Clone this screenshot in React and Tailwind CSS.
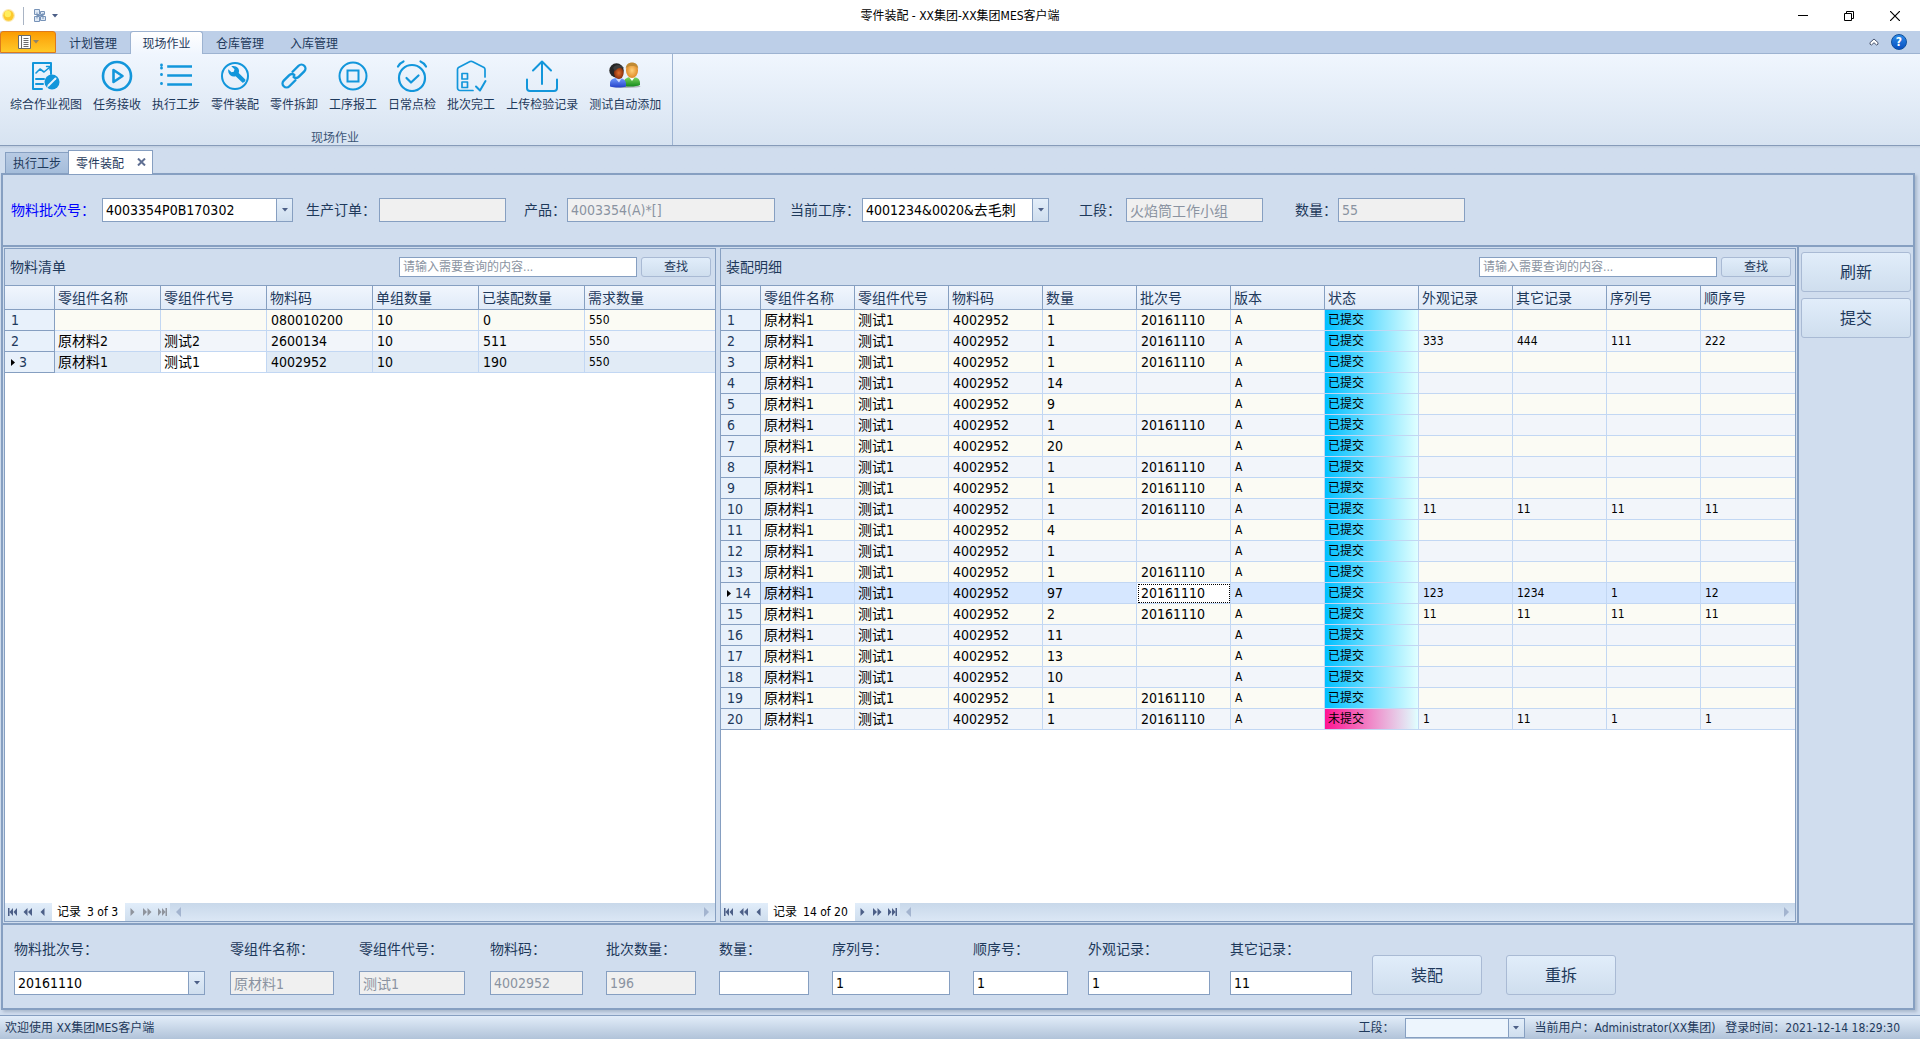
import React, { useState } from 'react';

const ribbonTabs = ['计划管理', '现场作业', '仓库管理', '入库管理'];

const materialRows = [
    ['', '', '080010200', '10', '0', '550'],
    ['原材料2', '测试2', '2600134', '10', '511', '550'],
    ['原材料1', '测试1', '4002952', '10', '190', '550'],
];

// qty, batch, submitted, appearance, other, serial, sequence
const detailRows = [
    ['1', '20161110', true],
    ['1', '20161110', true, '333', '444', '111', '222'],
    ['1', '20161110', true],
    ['14', '', true],
    ['9', '', true],
    ['1', '20161110', true],
    ['20', '', true],
    ['1', '20161110', true],
    ['1', '20161110', true],
    ['1', '20161110', true, '11', '11', '11', '11'],
    ['4', '', true],
    ['1', '', true],
    ['1', '20161110', true],
    ['97', '20161110', true, '123', '1234', '1', '12'],
    ['2', '20161110', true, '11', '11', '11', '11'],
    ['11', '', true],
    ['13', '', true],
    ['10', '', true],
    ['1', '20161110', true],
    ['1', '20161110', false, '1', '11', '1', '1'],
];

const materialHeads = ['零组件名称', '零组件代号', '物料码', '单组数量', '已装配数量', '需求数量'];
const detailHeads = ['零组件名称', '零组件代号', '物料码', '数量', '批次号', '版本', '状态', '外观记录', '其它记录', '序列号', '顺序号'];

function LineIcon({ children, width = 2 }) {
    return (
        <svg width="32" height="32" viewBox="0 0 32 32" fill="none" stroke="#1296db" strokeWidth={width} strokeLinecap="round" strokeLinejoin="round">
            {children}
        </svg>
    );
}

const ReportIcon = () => (
    <LineIcon>
        <path d="M12 29H3V3h18v11" />
        <path d="M6 13l4-4 4 3 6-5" strokeWidth="1.6" />
        <path d="M16.5 6.5H20V10" strokeWidth="1.4" />
        <path d="M6 19h8M6 24h7" />
        <circle cx="22" cy="22" r="7.5" fill="#1296db" stroke="none" />
        <path d="M18.5 25.5l7-7" stroke="#eaf3fc" strokeWidth="2" />
        <path d="M18 26.2l-.6 1.2" stroke="#eaf3fc" strokeWidth="1" />
    </LineIcon>
);

const PlayIcon = () => (
    <LineIcon width={2.6}>
        <circle cx="16" cy="16" r="14" />
        <path d="M12.5 10v12l9-6z" />
    </LineIcon>
);

const ListIcon = () => (
    <LineIcon width={2.6}>
        <path d="M8.5 6.5H31M8.5 15.5H31M8.5 24.5H31" strokeLinecap="square" />
        <path d="M1.5 5v.2M1.5 8v.2M1.5 14.5v.2M1.5 23.5v.2" strokeWidth="2.8" />
    </LineIcon>
);

const WrenchIcon = () => (
    <LineIcon>
        <circle cx="16" cy="16" r="13" />
        <path
            d="M9.3 9.2l3.2 3.1 2.3-.6.7-2.4-3.2-3.1c2.7-.6 5.3 0 6.7 1.9 1.2 1.6 1.3 3.3.7 5l6.6 6.4c1 1-1.9 4-3 3l-6.6-6.3c-2 .7-3.9.3-5.4-1-1.7-1.6-2.5-3.900-2-6z"
            fill="#1296db"
            stroke="none"
        />
    </LineIcon>
);

const ChainIcon = () => (
    <LineIcon width={2.4}>
        <g transform="rotate(-45 16 16)">
            <path d="M14 20H5.5a4 4 0 0 1 0-8H13a4 4 0 0 1 4 3.5" />
            <path d="M18 12h8.5a4 4 0 0 1 0 8H19a4 4 0 0 1-4-3.5" />
        </g>
    </LineIcon>
);

const StopIcon = () => (
    <LineIcon>
        <circle cx="16" cy="16" r="13.5" />
        <path d="M10.5 10.5h11v11h-11z" strokeLinejoin="miter" />
    </LineIcon>
);

const AlarmIcon = () => (
    <LineIcon width={2.2}>
        <circle cx="16" cy="18" r="13" />
        <path d="M10.5 18l4.5 4.5 7.5-7M2 6.5C3.5 4 5 2.5 7.5 1.5M30 6.5C28.5 4 27 2.5 24.5 1.5" />
    </LineIcon>
);

const BatchIcon = () => (
    <LineIcon width={1.7}>
        <path d="M18 30.500H5a2.500 2.500 0 0 1-2.500-2.500V9.500c0-1 .3-1.500 1-2L15 1.600c.8-.4 1.500-.4 2.200 0L29 7.500c.7.500 1 1 1 2V17" />
        <path d="M7 13.500h5.500V19H7zM7 22h5.500v5.500H7z" />
        <path d="M21 26.500l4 4L30.500 21" strokeWidth="2" />
    </LineIcon>
);

const UploadIcon = () => (
    <LineIcon>
        <path d="M1 19.500V28a3 3 0 0 0 3 3h24a3 3 0 0 0 3-3v-8.500M16 24V1.500M7 10.500l9-9 9 9" />
    </LineIcon>
);

const PeopleIcon = () => (
    <svg width="32" height="32" viewBox="0 0 32 32">
        <defs>
            <linearGradient id="shirtBlue" x1="0" y1="0" x2="0" y2="1">
                <stop offset="0" stopColor="#6f9bff" />
                <stop offset="1" stopColor="#2541c8" />
            </linearGradient>
            <linearGradient id="shirtGreen" x1="0" y1="0" x2="0" y2="1">
                <stop offset="0" stopColor="#7fd860" />
                <stop offset="1" stopColor="#148a1c" />
            </linearGradient>
            <radialGradient id="faceDark">
                <stop offset="0" stopColor="#e0702e" />
                <stop offset="1" stopColor="#8a2f0c" />
            </radialGradient>
            <radialGradient id="faceLight">
                <stop offset="0" stopColor="#ffd07a" />
                <stop offset="1" stopColor="#e08b28" />
            </radialGradient>
        </defs>
        <ellipse cx="17" cy="26.500" rx="14.500" ry="1.500" fill="#000" opacity=".25" />
        <path d="M15 26v-4c0-3 3-5 8-5s8 2 8 6v2c-3 1.500-10 2-16 1z" fill="url(#shirtGreen)" />
        <path d="M20 17l3 4 3-4z" fill="#fff" />
        <ellipse cx="23" cy="10.500" rx="6" ry="7.500" fill="url(#faceLight)" />
        <path d="M16.800 8.500c0-4 3-6 6.200-6s6.200 2 6.200 6c-1.500-2-3.500-2.500-6.200-2.500s-4.700.5-6.200 2.500z" fill="#c08a34" />
        <path d="M1 26.500v-3c0-4 3-5.500 8-5.500s8 2 8 6v2.500c-3 1.200-11 1.500-16 0z" fill="url(#shirtBlue)" />
        <path d="M6.500 18.500l3.500 4 2.500-4z" fill="#cfdcff" />
        <circle cx="7.500" cy="10.500" r="7.200" fill="#262626" />
        <ellipse cx="9.800" cy="13" rx="4.800" ry="6" fill="url(#faceDark)" />
        <path d="M4 8c2-4 8-4 11 0-4-1-7 0-9 3z" fill="#3d3d3d" />
    </svg>
);

const tools = [
    { label: '综合作业视图', Icon: ReportIcon },
    { label: '任务接收', Icon: PlayIcon },
    { label: '执行工步', Icon: ListIcon },
    { label: '零件装配', Icon: WrenchIcon },
    { label: '零件拆卸', Icon: ChainIcon },
    { label: '工序报工', Icon: StopIcon },
    { label: '日常点检', Icon: AlarmIcon },
    { label: '批次完工', Icon: BatchIcon },
    { label: '上传检验记录', Icon: UploadIcon },
    { label: '测试自动添加', Icon: PeopleIcon },
];

function Caret({ className = '' }) {
    return (
        <svg className={className} width="6" height="4" viewBox="0 0 6 4">
            <path d="M0 0h6L3 3.5z" fill="#4c5f87" />
        </svg>
    );
}

function Combo({ id, value, className, height = 'h-6', text = 'text-[14px]', bg = 'bg-white' }) {
    return (
        <div className={`relative shrink-0 ${height} ${className}`}>
            <select id={id} className={`h-full w-full appearance-none border border-[#869fc1] pl-[3px] pr-5 text-black outline-none ${bg} ${text}`}>
                <option>{value}</option>
            </select>
            <span className="pointer-events-none absolute inset-y-px right-px flex w-4 items-center justify-center border-l border-[#869fc1] bg-linear-to-b from-[#e3eefa] to-[#cfdeee]">
                <Caret />
            </span>
        </div>
    );
}

function TextBox({ id, value, disabled, className = '' }) {
    return (
        <input
            id={id}
            type="text"
            defaultValue={value}
            disabled={disabled}
            className={`h-6 shrink-0 border border-[#869fc1] bg-white px-[3px] text-[14px] text-black outline-none disabled:bg-[#f0f0f0] disabled:text-[#8a93a1] ${className}`}
        />
    );
}

function PushButton({ children, className }) {
    return (
        <button type="button" className={`shrink-0 rounded-[3px] border border-[#a9bad4] bg-linear-to-b from-[#e1edfa] to-[#cfdeee] text-[#1e395b] ${className}`}>
            {children}
        </button>
    );
}

function NavIcon({ name, disabled }) {
    const shapes = {
        first: 'M0 0h1.5v8H0zM5 0v8L1.5 4zM9 0v8L5.5 4z',
        fastPrev: 'M4.5 0v8L.5 4zM9 0v8L5 4z',
        prev: 'M6.5 0v8L2.5 4z',
        next: 'M2.5 0v8l4-4z',
        fastNext: 'M0 0v8l4-4zM4.5 0v8l4-4z',
        last: 'M0 0v8l3.5-4zM4 0v8l3.5-4zM7.5 0H9v8H7.5z',
    };
    return (
        <svg width="9" height="8" viewBox="0 0 9 8">
            <path d={shapes[name]} fill={disabled ? '#8f949d' : '#4c5f87'} />
        </svg>
    );
}

function NavButton({ name, label, disabled }) {
    return (
        <button type="button" aria-label={label} disabled={disabled} className="flex h-full w-[15px] items-center justify-center">
            <NavIcon name={name} disabled={disabled} />
        </button>
    );
}

function RecordNavigator({ current, total }) {
    const atEnd = current === total;
    return (
        <div className="flex h-[18px] shrink-0 items-stretch bg-linear-to-b from-[#c8d8ea] to-[#dbe7f5] text-[12px]">
            <div className="flex items-center bg-linear-to-b from-[#e1edfa] to-[#cfdeee] pr-0.5">
                <NavButton name="first" label="首条" />
                <NavButton name="fastPrev" label="上一页" />
                <NavButton name="prev" label="上一条" />
            </div>
            <span className="flex items-center gap-1.5 bg-white pr-[7px] pl-[5px] leading-[18px] text-black">
                <span>记录</span>
                <span>{current} of {total}</span>
            </span>
            <div className="flex items-center bg-linear-to-b from-[#e1edfa] to-[#cfdeee]">
                <NavButton name="next" label="下一条" disabled={atEnd} />
                <NavButton name="fastNext" label="下一页" disabled={atEnd} />
                <NavButton name="last" label="末条" disabled={atEnd} />
            </div>
            <div className="flex flex-1 items-center justify-between px-1.5">
                <svg width="5" height="10" viewBox="0 0 5 10">
                    <path d="M5 0v10L0 5z" fill="#a3b4cf" />
                </svg>
                <svg width="5" height="10" viewBox="0 0 5 10">
                    <path d="M0 0v10l5-5z" fill="#a3b4cf" />
                </svg>
            </div>
        </div>
    );
}

function HeadRow({ heads }) {
    return (
        <thead>
            <tr className="h-6 bg-linear-to-b from-[#f1f6fd] to-[#dfeaf8] text-left text-[14px] text-[#1e395b]">
                <th className="border-r border-b border-[#869fc1]" aria-label="行号"></th>
                {heads.map((head) => (
                    <th key={head} className="border-r border-b border-[#869fc1] pl-[3px] font-normal leading-5 last:border-r-0">
                        {head}
                    </th>
                ))}
            </tr>
        </thead>
    );
}

function RowNumber({ n, focused }) {
    return (
        <td className="border-r border-b border-[#869fc1] bg-[#e8f1fb] pl-1.5 text-[14px] leading-5 text-[#1e395b]">
            <span className="flex items-center gap-1">
                {focused && (
                    <svg width="4" height="7" viewBox="0 0 4 7">
                        <path d="M0 0v7l4-3.5z" fill="#000" />
                    </svg>
                )}
                {n}
            </span>
        </td>
    );
}

function Cell({ children, small, className = 'pl-1' }) {
    return (
        <td className={`border-r border-b border-[#c2d7f3] leading-5 text-black last:border-r-0 ${small ? 'text-[12px]' : 'text-[14px]'} ${className}`}>
            {children}
        </td>
    );
}

function stripe(i) {
    return i % 2 === 0 ? 'bg-[#fbfbf4]' : 'bg-[#f2f5fa]';
}

function MaterialTable() {
    const focusedRow = 2;
    return (
        <table className="w-full table-fixed border-separate border-spacing-0">
            <colgroup>
                <col className="w-[50px]" />
                <col className="w-[106px]" />
                <col className="w-[106px]" />
                <col className="w-[106px]" />
                <col className="w-[106px]" />
                <col className="w-[106px]" />
                <col />
            </colgroup>
            <HeadRow heads={materialHeads} />
            <tbody>
                {materialRows.map((row, i) => (
                    <tr key={i} className={`h-[21px] ${i === focusedRow ? 'bg-[#e1ebf6]' : stripe(i)}`}>
                        <RowNumber n={i + 1} focused={i === focusedRow} />
                        {row.map((text, c) => (
                            <Cell key={c} small={c === 5} className={`${c < 2 ? 'pl-[3px]' : 'pl-1'} ${i === focusedRow && c === 1 ? 'bg-white' : ''}`}>
                                {text}
                            </Cell>
                        ))}
                    </tr>
                ))}
            </tbody>
        </table>
    );
}

function DetailTable() {
    const focusedRow = 13;
    return (
        <table className="w-full table-fixed border-separate border-spacing-0">
            <colgroup>
                <col className="w-10" />
                {detailHeads.slice(0, -1).map((head) => (
                    <col key={head} className="w-[94px]" />
                ))}
                <col />
            </colgroup>
            <HeadRow heads={detailHeads} />
            <tbody>
                {detailRows.map(([qty, batch, submitted, ...records], i) => (
                    <tr key={i} className={`h-[21px] ${i === focusedRow ? 'bg-[#d6e7ff]' : stripe(i)}`}>
                        <RowNumber n={i + 1} focused={i === focusedRow} />
                        <Cell className="pl-[3px]">原材料1</Cell>
                        <Cell className="pl-[3px]">测试1</Cell>
                        <Cell>4002952</Cell>
                        <Cell>{qty}</Cell>
                        <Cell className={i === focusedRow ? 'bg-white pl-1 outline-1 -outline-offset-2 outline-dotted outline-black' : 'pl-1'}>{batch}</Cell>
                        <Cell small>A</Cell>
                        <Cell small className={submitted ? 'bg-linear-to-r/srgb from-[#00bfff] to-[#e0ffff] pl-[3px]' : 'bg-linear-to-r/srgb from-[#ff1493] to-[#e0ffff] pl-[3px]'}>
                            {submitted ? '已提交' : '未提交'}
                        </Cell>
                        {[0, 1, 2, 3].map((c) => (
                            <Cell key={c} small>{records[c]}</Cell>
                        ))}
                    </tr>
                ))}
            </tbody>
        </table>
    );
}

function GridPanel({ title, className, children, current, total }) {
    return (
        <section className={`flex flex-col border border-[#869fc1] bg-white ${className}`}>
            <div className="flex h-9 shrink-0 items-center bg-[#d0ddee] pr-1 pl-[5px]">
                <h2 className="flex-1 text-[14px] text-[#1e395b]">{title}</h2>
                <input
                    type="search"
                    aria-label={`${title}查询`}
                    placeholder="请输入需要查询的内容..."
                    className="mr-1 h-5 w-[238px] border border-[#869fc1] bg-white px-[3px] text-[12px] outline-none placeholder:text-[#8a93a1]"
                />
                <PushButton className="h-5 w-[70px] text-[12px] leading-4">查找</PushButton>
            </div>
            <div className="flex-1 border-t border-[#869fc1]">{children}</div>
            <RecordNavigator current={current} total={total} />
        </section>
    );
}

function TopField({ id, label, children, className = '' }) {
    return (
        <div className={`flex shrink-0 items-center ${className}`}>
            <label htmlFor={id} className="flex-1 whitespace-nowrap">{label}：</label>
            {children}
        </div>
    );
}

function BottomField({ id, label, children }) {
    return (
        <div className="flex shrink-0 flex-col">
            <label htmlFor={id} className="mb-3 leading-5">{label}：</label>
            {children}
        </div>
    );
}

export default function App() {
    const [activeTab, setActiveTab] = useState('现场作业');

    return (
        <div className="flex min-h-screen flex-col bg-[#d0ddee] font-['DejaVu_Sans_Condensed','Noto_Sans_CJK_SC',sans-serif] text-[12px] text-[#1e395b]">
            {/* Title bar */}
            <header className="grid h-[31px] shrink-0 grid-cols-[1fr_auto_1fr] items-center bg-white text-black">
                <div className="flex items-center pl-0.5">
                    <svg width="13" height="13" viewBox="0 0 13 13">
                        <circle cx="6.5" cy="6.5" r="6.5" fill="#fbe9b0" />
                        <circle cx="6.5" cy="6.5" r="5.2" fill="#fdc92c" />
                        <circle cx="5.8" cy="5" r="3.2" fill="#ffee5e" />
                    </svg>
                    <span className="mr-[10px] ml-2 h-[18px] w-px bg-[#a9b4c4]"></span>
                    <svg width="12" height="13" viewBox="0 0 12 13" fill="#dfe9f5" stroke="#7793b8">
                        <path d="M.5.5h5v5h-5zM.5 7.5h5v5h-5zM6.5 2.500h4v3h-4zM6.5 7.500h5v4h-5z" />
                        <path d="M3 3.500v6M3 6.500h6M9 4v6" />
                    </svg>
                    <Caret className="ml-1.5" />
                </div>
                <h1 className="text-[12px]">零件装配 - XX集团-XX集团MES客户端</h1>
                <div className="flex h-full items-stretch justify-end pr-0.5">
                    <button type="button" aria-label="最小化" className="flex w-[46px] items-center justify-center">
                        <svg width="10" height="10" viewBox="0 0 10 10"><path d="M0 4.5h10" stroke="#000" /></svg>
                    </button>
                    <button type="button" aria-label="还原" className="flex w-[46px] items-center justify-center">
                        <svg width="10" height="10" viewBox="0 0 10 10" fill="none" stroke="#000"><path d="M.5 2.5h7v7h-7zM2.5 2.5v-2h7v7h-2" /></svg>
                    </button>
                    <button type="button" aria-label="关闭" className="flex w-[46px] items-center justify-center">
                        <svg width="10" height="10" viewBox="0 0 10 10"><path d="M0 0l10 10M10 0L0 10" stroke="#000" strokeWidth="1.2" /></svg>
                    </button>
                </div>
            </header>

            {/* Ribbon tabs */}
            <nav className="flex h-[22px] shrink-0 items-stretch bg-[#bdcfe8]">
                <button type="button" aria-label="菜单" className="flex w-14 items-center justify-center gap-0.5 rounded-t-[3px] border border-[#dd7a1c] bg-linear-to-b from-[#fb9c00] to-[#ffc926]">
                    <svg width="13" height="14" viewBox="0 0 13 14">
                        <path d="M.5.5h12v13H.5z" fill="#fff" stroke="#6b6b6b" />
                        <path d="M3.5 1v12M5.5 3.500h5M5.500 5.500h5M5.500 7.500h5M5.500 9.500h5M5.500 11.500h5" stroke="#6b6b6b" fill="none" />
                    </svg>
                    <svg width="6" height="4" viewBox="0 0 6 4"><path d="M0 0h6L3 3.5z" fill="#8f8468" /></svg>
                </button>
                <div className="flex">
                    {ribbonTabs.map((tab) => (
                        <button
                            key={tab}
                            type="button"
                            onClick={() => setActiveTab(tab)}
                            className={
                                tab === activeTab
                                    ? 'relative -mb-px w-[73px] rounded-t-[3px] border border-b-0 border-[#9db3d1] bg-linear-to-b from-white to-[#f0f6fe] pt-0.5'
                                    : 'w-[74px] pt-[3px]'
                            }
                        >
                            {tab}
                        </button>
                    ))}
                </div>
                <div className="ml-auto flex items-center gap-3 pr-[13px]">
                    <button type="button" aria-label="折叠功能区">
                        <svg width="10" height="8" viewBox="0 0 10 8"><path d="M1 6.200V4.600L5 1l4 3.600v1.600L7.500 7 5 4.700 2.500 7z" fill="#fff" stroke="#4a5670" /></svg>
                    </button>
                    <button type="button" aria-label="帮助" className="flex size-4 items-center justify-center rounded-full border border-[#0d4f9e] bg-linear-to-b from-[#2e8be8] to-[#0a4fc0] text-[12px] leading-none font-bold text-white">
                        ?
                    </button>
                </div>
            </nav>

            {/* Ribbon */}
            <div className="flex h-[93px] shrink-0 border-y border-t-[#9db3d1] border-b-[#869bb9] bg-linear-to-b from-[#f0f6fe] to-[#d7e3f1]">
                <div className="flex flex-col border-r border-[#9db3d1] pr-[6px]">
                    <div className="flex gap-px pt-1.5 pl-[5px]">
                        {tools.map(({ label, Icon }) => (
                            <button key={label} type="button" className="flex flex-col items-center px-[5px]">
                                <Icon />
                                <span className="mt-1 leading-[18px] whitespace-nowrap">{label}</span>
                            </button>
                        ))}
                    </div>
                    <div className="mt-auto pl-1 text-center leading-[14px] text-[#3b5576]">现场作业</div>
                </div>
            </div>

            {/* Document tabs */}
            <div className="flex h-[27px] shrink-0 items-end bg-linear-to-b from-[#bfcddf] to-[#d0ddee] to-10% pl-[5px]">
                <button type="button" className="h-[21px] w-16 border border-b-0 border-[#869fc1] bg-linear-to-b from-[#b7cae3] to-[#a5bddb] pt-0.5 leading-[18px]">
                    执行工步
                </button>
                <div className="relative -mb-px -ml-px flex h-6 w-[85px] items-center justify-between border border-b-0 border-[#869fc1] bg-white pr-1.5 pl-[7px]">
                    <button type="button" className="pt-0.5">零件装配</button>
                    <button type="button" aria-label="关闭选项卡" className="self-start pt-[7px]">
                        <svg width="9" height="8" viewBox="0 0 9 8"><path d="M1 .5l7 7M8 .5l-7 7" stroke="#5f6f92" strokeWidth="2" /></svg>
                    </button>
                </div>
            </div>

            <main className="mr-[5px] ml-px flex flex-1 flex-col border-2 border-[#869fc1] shadow-[2px_2px_3px_#a9b8cc]">
                {/* Batch filters */}
                <form className="flex h-[72px] shrink-0 items-center border-b-2 border-[#869fc1] pl-2 text-[14px]">
                    <TopField id="lot" label="物料批次号" className="mr-[13px] w-[282px] text-[#0000ff]">
                        <Combo id="lot" value="4003354P0B170302" className="w-[191px]" />
                    </TopField>
                    <TopField id="order" label="生产订单" className="mr-[18px] w-[200px]">
                        <TextBox id="order" value="" disabled className="w-[127px]" />
                    </TopField>
                    <TopField id="product" label="产品" className="mr-[15px] w-[251px]">
                        <TextBox id="product" value="4003354(A)*[]" disabled className="w-[208px]" />
                    </TopField>
                    <TopField id="process" label="当前工序" className="mr-[30px] w-[259px]">
                        <Combo id="process" value="4001234&0020&去毛刺" className="w-[187px]" />
                    </TopField>
                    <TopField id="section" label="工段" className="mr-8 w-[184px]">
                        <TextBox id="section" value="火焰筒工作小组" disabled className="w-[137px]" />
                    </TopField>
                    <TopField id="count" label="数量" className="w-[170px]">
                        <TextBox id="count" value="55" disabled className="w-[127px]" />
                    </TopField>
                </form>

                <div className="flex flex-1">
                    <div className="flex min-w-0 flex-1 gap-1 p-px">
                        <GridPanel title="物料清单" className="w-[712px] shrink-0" current={3} total={3}>
                            <MaterialTable />
                        </GridPanel>
                        <GridPanel title="装配明细" className="min-w-0 flex-1" current={14} total={20}>
                            <DetailTable />
                        </GridPanel>
                    </div>
                    <aside className="flex w-[116px] shrink-0 flex-col gap-1.5 border-l-2 border-[#869fc1] px-0.5 pt-[5px]">
                        <PushButton className="h-10 pt-0.5 text-[16px]">刷新</PushButton>
                        <PushButton className="h-10 pt-0.5 text-[16px]">提交</PushButton>
                    </aside>
                </div>

                {/* Assembly entry */}
                <form className="flex h-[85px] shrink-0 items-end border-t-2 border-[#869fc1] pb-[13px] pl-[11px] text-[14px]">
                    <div className="mr-[23px] flex items-end gap-[25px]">
                        <BottomField id="inLot" label="物料批次号">
                            <Combo id="inLot" value="20161110" className="w-[191px]" />
                        </BottomField>
                        <BottomField id="inName" label="零组件名称">
                            <TextBox id="inName" value="原材料1" disabled className="w-[104px]" />
                        </BottomField>
                        <BottomField id="inCode" label="零组件代号">
                            <TextBox id="inCode" value="测试1" disabled className="w-[106px]" />
                        </BottomField>
                        <BottomField id="inPart" label="物料码">
                            <TextBox id="inPart" value="4002952" disabled className="w-[93px]" />
                        </BottomField>
                    </div>
                    <div className="mr-5 flex items-end gap-[23px]">
                        <BottomField id="inLotQty" label="批次数量">
                            <TextBox id="inLotQty" value="196" disabled className="w-[90px]" />
                        </BottomField>
                        <BottomField id="inQty" label="数量">
                            <TextBox id="inQty" value="" className="w-[90px]" />
                        </BottomField>
                        <BottomField id="inSerial" label="序列号">
                            <TextBox id="inSerial" value="1" className="w-[118px]" />
                        </BottomField>
                        <BottomField id="inSeq" label="顺序号">
                            <TextBox id="inSeq" value="1" className="w-[95px]" />
                        </BottomField>
                    </div>
                    <div className="flex items-end gap-5">
                        <BottomField id="inLook" label="外观记录">
                            <TextBox id="inLook" value="1" className="w-[122px]" />
                        </BottomField>
                        <BottomField id="inOther" label="其它记录">
                            <TextBox id="inOther" value="11" className="w-[122px]" />
                        </BottomField>
                        <PushButton className="mr-1 h-10 w-[110px] pt-0.5 text-[16px]">装配</PushButton>
                        <PushButton className="h-10 w-[110px] pt-0.5 text-[16px]">重拆</PushButton>
                    </div>
                </form>
            </main>

            {/* Status bar */}
            <footer className="mt-[5px] flex h-6 shrink-0 items-center border-t border-[#869fc1] bg-linear-to-b from-[#e2edf9] to-[#b1c3d9] pr-5 pl-[5px]">
                <span className="flex-1">欢迎使用 XX集团MES客户端</span>
                <label htmlFor="statusSection" className="mr-[10px]">工段：</label>
                <Combo id="statusSection" value="" className="mr-[10px] w-[120px]" height="h-5" text="text-[12px]" bg="bg-[#edf5fd]" />
                <span>当前用户：Administrator(XX集团)</span>
                <span className="ml-2.5">登录时间：2021-12-14 18:29:30</span>
            </footer>
        </div>
    );
}
